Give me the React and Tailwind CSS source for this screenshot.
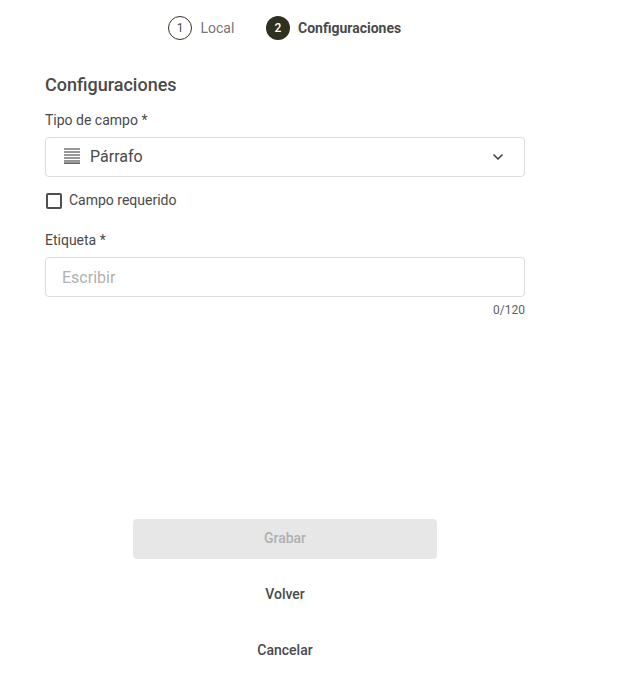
import { ChevronDown } from 'lucide-react';

function ParagraphIcon() {
  return (
    <svg width="16" height="16" viewBox="0 0 16 16" fill="none" stroke="#333333" strokeWidth="1.2" className="relative -top-px">
      <path d="M0 1h16M0 4h16M0 7h16M0 10h16M0 13h16M0 15.2h16" />
    </svg>
  );
}

export default function App() {
  return (
    <div className="w-[633px] h-[681px] bg-white font-['Roboto',sans-serif] text-[#4a4a4a] flex flex-col">
      <div className="h-[56px] pl-[168px] flex items-center">
        <div className="w-6 h-6 rounded-full border border-[#33331f] flex items-center justify-center text-xs">1</div>
        <span className="ml-[8.5px] w-[33.5px] text-sm text-[#757575]">Local</span>
        <div className="ml-[32px] w-6 h-6 rounded-full bg-[#2e3020] text-white flex items-center justify-center text-xs font-medium">2</div>
        <span className="ml-2 text-sm font-bold">Configuraciones</span>
      </div>

      <div className="w-[480px] ml-[45px]">
        <h2 className="mt-[17px] text-lg leading-6 font-medium">Configuraciones</h2>
        <div className="mt-[15px] text-sm leading-[17px]">Tipo de campo *</div>
        <div className="mt-[8px] h-10 border border-[#dcdcdc] rounded flex items-center pl-[18px] pr-[18px]">
          <ParagraphIcon />
          <span className="ml-[10px] text-base">Párrafo</span>
          <ChevronDown size={16} strokeWidth={2.5} className="ml-auto text-[#424242]" />
        </div>
        <div className="mt-[15px] flex items-center h-4">
          <div className="ml-[1px] mt-[2px] w-4 h-4 border-2 border-[#4f4f4f] rounded-[2px]"></div>
          <span className="ml-[7px] text-sm">Campo requerido</span>
        </div>
        <div className="mt-[24px] text-sm leading-[17px]">Etiqueta *</div>
        <div className="mt-[8px] h-10 border border-[#dcdcdc] rounded flex items-center px-4 text-base text-[#b0b0b0]">
          <span className="relative top-[1px]">Escribir</span>
        </div>
        <div className="mt-[6px] text-right text-xs leading-[15px] text-[#616161]">0/120</div>
      </div>

      <div className="mt-[201px] w-[304px] ml-[133px] flex flex-col items-center text-sm font-medium">
        <div className="w-full h-10 rounded bg-[#e7e7e7] text-[#b0b0b0] flex items-center justify-center pb-[2px]">Grabar</div>
        <div className="mt-[16px] h-10 flex items-center pb-[2px]">Volver</div>
        <div className="mt-[16px] h-10 flex items-center pb-[2px]">Cancelar</div>
      </div>
    </div>
  );
}
